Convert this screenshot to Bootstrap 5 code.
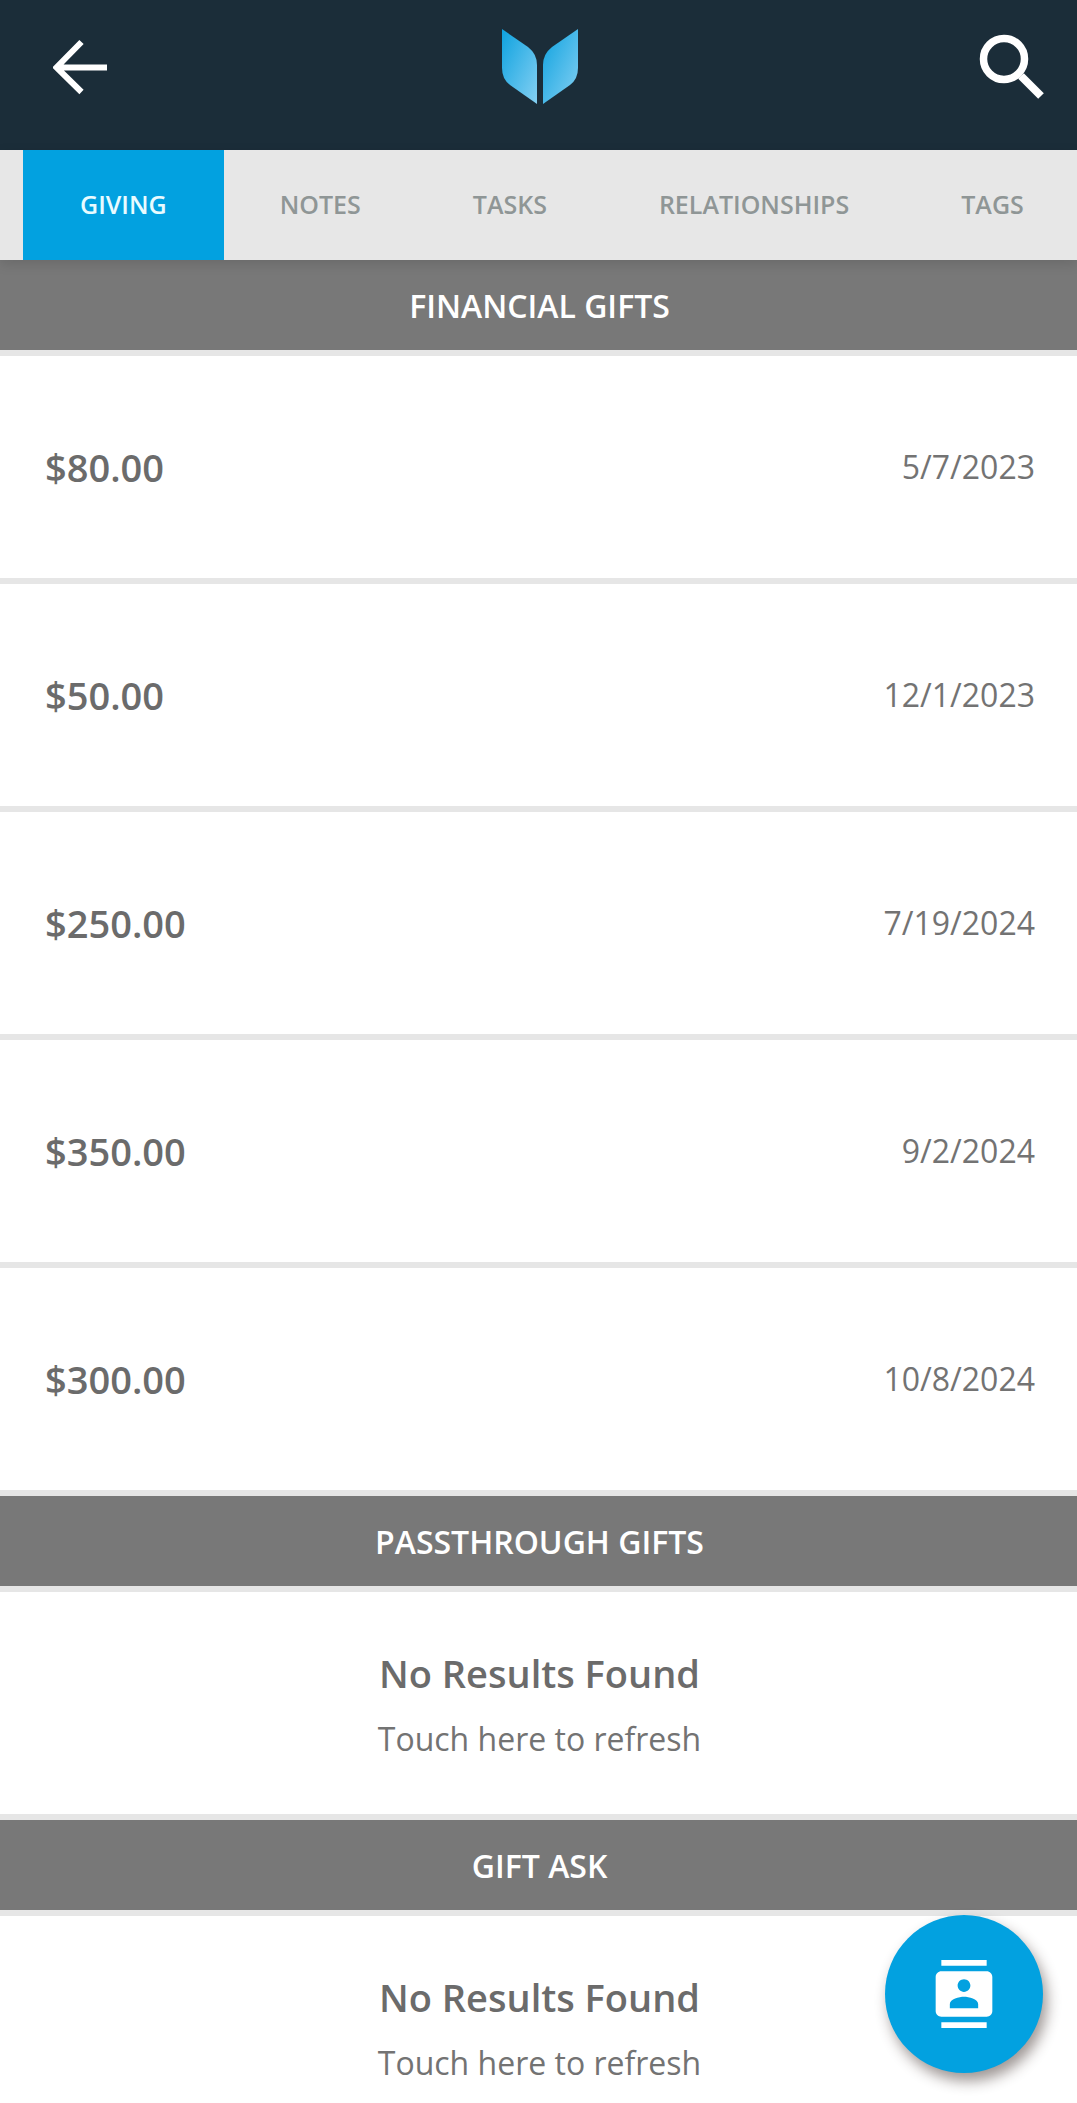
<!DOCTYPE html>
<html lang="en">
<head>
<meta charset="utf-8">
<meta name="viewport" content="width=device-width, initial-scale=1">
<title>Giving</title>
<link href="https://cdn.jsdelivr.net/npm/bootstrap@5.3.0/dist/css/bootstrap.min.css" rel="stylesheet">
<style>
  body { font-family: "Open Sans", "Noto Sans", sans-serif; color: #6b6b6b; background: #fff; }
  .app-bar { height: 150px; padding: 0 32px 16px 53px; background: #1b2d39; }
  .app-bar .btn { border-radius: 0; }
  .tab-strip { height: 110px; padding-left: 23px; background: #e7e7e7; box-shadow: 0 4px 12px rgba(0, 0, 0, .12); z-index: 1; }
  .tab-strip .nav-link { padding: 0 56px; border-radius: 0; color: #8f9696; font-size: 25px; font-weight: 600; }
  .tab-strip .nav-link.active { padding: 0 57px; background: #02a1e0; color: #e9fbff; }
  .section-title { height: 96px; margin: 0; padding: 2px 0 0 2px; background: #787878; color: #fff; border-bottom: 6px solid #e6e6e6; font-size: 32px; font-weight: 600; }
  .gift-list .list-group-item, .gift-list .list-group-item:last-child { height: 228px; padding: 0 42px 0 45px; border-width: 0 0 6px; border-color: #e6e6e6; color: #6b6b6b; }
  .amount, .empty-title { font-size: 38px; line-height: 52px; font-weight: 600; }
  .gift-date, .empty-hint { font-size: 32px; line-height: 44px; color: #737373; }
  .empty-state { height: 228px; padding: 2px 0 0 2px; gap: 18px; background: #fff; border: 0; border-bottom: 6px solid #e6e6e6; color: #6b6b6b; }
  .fab { right: 34px; bottom: 30px; width: 158px; height: 158px; background: #02a1e0; box-shadow: 4px 8px 14px rgba(40, 25, 20, .45); z-index: 2; }
  .fab:hover { background: #0292cc; }
</style>
<script src="https://cdn.jsdelivr.net/npm/bootstrap@5.3.0/dist/js/bootstrap.bundle.min.js"></script>
</head>
<body>
<div class="vh-100 d-flex flex-column overflow-hidden position-relative">
  <header class="app-bar d-flex align-items-center justify-content-between flex-shrink-0">
    <button type="button" class="btn p-0 border-0 d-flex" aria-label="Back">
      <svg width="66" height="56" viewBox="0 0 66 56" fill="none" stroke="#fff" stroke-width="6"><path d="M54 28.500H4M28.500 3L3.500 28.500L28.500 53"/></svg>
    </button>
    <svg width="96" height="76" viewBox="0 0 96 76" role="img" aria-label="Home">
      <defs><linearGradient id="leaf" x1="0" y1="0" x2="1" y2="1"><stop offset="0" stop-color="#0ea2df"/><stop offset="1" stop-color="#84d0f3"/></linearGradient></defs>
      <path fill="url(#leaf)" d="M1 0L27 18Q36 25 36 36V75L9 56Q1 50 1 39Z"/>
      <path fill="url(#leaf)" d="M77 0L51 18Q42 25 42 36V75L69 56Q77 50 77 39Z"/>
    </svg>
    <button type="button" class="btn p-0 border-0 d-flex" aria-label="Search">
      <svg width="66" height="66" viewBox="0 0 66 66" fill="none" stroke="#fff"><circle cx="25" cy="25" r="20.500" stroke-width="7.500"/><path d="M42 42L62 62" stroke-width="8"/></svg>
    </button>
  </header>
  <nav class="tab-strip nav nav-pills flex-nowrap flex-shrink-0 position-relative" aria-label="Constituent">
    <a class="nav-link active d-flex align-items-center" aria-current="page" href="#giving">GIVING</a>
    <a class="nav-link d-flex align-items-center" href="#notes">NOTES</a>
    <a class="nav-link d-flex align-items-center" href="#tasks">TASKS</a>
    <a class="nav-link d-flex align-items-center" href="#relationships">RELATIONSHIPS</a>
    <a class="nav-link d-flex align-items-center" href="#tags">TAGS</a>
  </nav>
  <main class="flex-grow-1 overflow-hidden" id="giving">
    <h2 class="section-title d-flex align-items-center justify-content-center">FINANCIAL GIFTS</h2>
    <ul class="gift-list list-group list-group-flush">
      <li class="list-group-item d-flex align-items-center justify-content-between"><span class="amount">$80.00</span><span class="gift-date">5/7/2023</span></li>
      <li class="list-group-item d-flex align-items-center justify-content-between"><span class="amount">$50.00</span><span class="gift-date">12/1/2023</span></li>
      <li class="list-group-item d-flex align-items-center justify-content-between"><span class="amount">$250.00</span><span class="gift-date">7/19/2024</span></li>
      <li class="list-group-item d-flex align-items-center justify-content-between"><span class="amount">$350.00</span><span class="gift-date">9/2/2024</span></li>
      <li class="list-group-item d-flex align-items-center justify-content-between"><span class="amount">$300.00</span><span class="gift-date">10/8/2024</span></li>
    </ul>
    <h2 class="section-title d-flex align-items-center justify-content-center">PASSTHROUGH GIFTS</h2>
    <button type="button" class="empty-state w-100 d-flex flex-column align-items-center justify-content-center">
      <span class="empty-title">No Results Found</span><span class="empty-hint">Touch here to refresh</span>
    </button>
    <h2 class="section-title d-flex align-items-center justify-content-center">GIFT ASK</h2>
    <button type="button" class="empty-state w-100 d-flex flex-column align-items-center justify-content-center">
      <span class="empty-title">No Results Found</span><span class="empty-hint">Touch here to refresh</span>
    </button>
  </main>
  <button type="button" class="fab btn border-0 rounded-circle position-absolute p-0 d-flex align-items-center justify-content-center" aria-label="Add contact report">
    <svg width="68" height="68" viewBox="0 0 24 24" fill="#fff"><path d="M20 0H4v2h16V0zM4 24h16v-2H4v2zM20 4H4c-1.100 0-2 .9-2 2v12c0 1.100.9 2 2 2h16c1.100 0 2-.9 2-2V6c0-1.100-.9-2-2-2zm-8 2.750c1.240 0 2.250 1.010 2.250 2.250s-1.010 2.250-2.250 2.250S9.750 10.240 9.750 9 10.760 6.750 12 6.750zM17 17H7v-1.500c0-1.670 3.330-2.500 5-2.500s5 .83 5 2.500V17z"/></svg>
  </button>
</div>
</body>
</html>
